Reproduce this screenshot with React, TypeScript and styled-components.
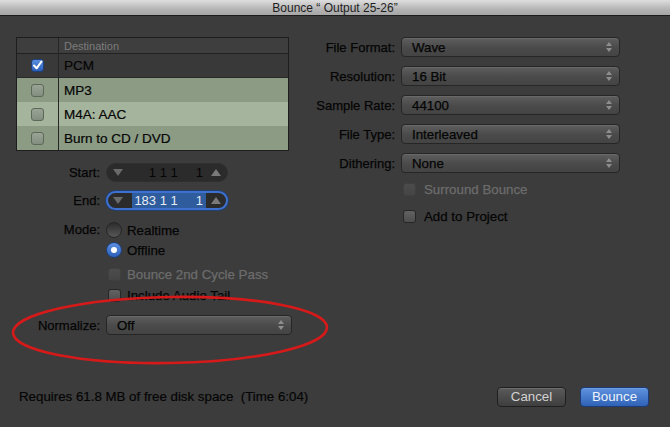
import React from "react";
import styled, { createGlobalStyle } from "styled-components";

const Global = createGlobalStyle`
  html, body { margin: 0; padding: 0; background: #3c3c3c; }
  body { font-family: "Liberation Sans", Arial, sans-serif; }
  * { box-sizing: border-box; }
`;

const Window = styled.div`
  position: relative;
  width: 670px;
  height: 427px;
  background: #3c3c3c;
  display: flex;
  flex-direction: column;
  overflow: hidden;
  font-size: 13px;
  color: #121212;
`;

const TitleBar = styled.div`
  height: 16px;
  border-bottom: 1px solid #1c1c1c;
  background: linear-gradient(#dedede, #b4b4b4 60%, #a6a6a6);
  display: flex;
  align-items: center;
  justify-content: center;
  font-size: 12px;
  color: #1e1e1e;
`;

const Body = styled.div`
  display: flex;
  padding: 21px 0 0 16px;
`;

const LeftCol = styled.div`
  width: 277px;
  display: flex;
  flex-direction: column;
`;

const RightCol = styled.div`
  margin-left: 17px;
  width: 310px;
  display: flex;
  flex-direction: column;
  gap: 9px;
`;

const Table = styled.div`
  width: 273px;
  height: 114px;
  border: 1px solid #1e1e1e;
  background: #3a3a3a;
  display: flex;
  flex-direction: column;
`;

const HeaderRow = styled.div`
  height: 16px;
  display: grid;
  grid-template-columns: 42px 1fr;
  border-bottom: 1px solid #222;
  background: #3e3e3e;
  font-size: 11px;
  color: #7c7c7c;
`;

const Cell = styled.div<{ $first?: boolean }>`
  display: flex;
  align-items: center;
  justify-content: ${(p) => (p.$first ? "center" : "flex-start")};
  padding-left: ${(p) => (p.$first ? "0" : "5px")};
  border-right: ${(p) => (p.$first ? "1px solid #262626" : "none")};
`;

const DestRow = styled.div<{ $bg: string; $sep?: boolean }>`
  height: 24px;
  display: grid;
  grid-template-columns: 42px 1fr;
  background: ${(p) => p.$bg};
  border-bottom: ${(p) => (p.$sep ? "1px solid #2a2a2a" : "none")};
  font-size: 13.5px;
  color: #050505;
  -webkit-text-stroke: 0.2px #050505;
`;

const Box = styled.span<{ $state: "on" | "off" | "row" | "dis" }>`
  width: 13px;
  height: 13px;
  border-radius: 3px;
  flex-shrink: 0;
  display: inline-flex;
  align-items: center;
  justify-content: center;
  border: 1px solid
    ${(p) =>
      p.$state === "on" ? "#1f3f7a" : p.$state === "row" ? "#5d6858" : p.$state === "dis" ? "#404040" : "#262626"};
  background: ${(p) =>
    p.$state === "on"
      ? "linear-gradient(#5a8ee0, #2c5fb8)"
      : p.$state === "row"
      ? "linear-gradient(#9aa496, #848e80)"
      : p.$state === "dis"
      ? "linear-gradient(#4c4c4c, #454545)"
      : "linear-gradient(#626262, #4e4e4e)"};
`;

const FieldRow = styled.div<{ $mt: number; $label?: number }>`
  display: grid;
  grid-template-columns: ${(p) => p.$label ?? 84}px auto;
  column-gap: 6px;
  align-items: center;
  margin-top: ${(p) => p.$mt}px;
`;

const Label = styled.span`
  text-align: right;
  color: #050505;
  -webkit-text-stroke: 0.25px #050505;
  font-size: 13px;
  white-space: nowrap;
`;

const Stepper = styled.div<{ $active?: boolean }>`
  width: 122px;
  height: 19px;
  border-radius: 10px;
  background: #2b2b2b;
  border: ${(p) => (p.$active ? "2px solid #3e70cf" : "1px solid #2f2f2f")};
  box-shadow: ${(p) => (p.$active ? "0 0 0 1px #21406f" : "none")};
  display: flex;
  align-items: center;
  padding: 0 ${(p) => (p.$active ? 5 : 6)}px;
  gap: 5px;
`;

const StepValue = styled.div<{ $active?: boolean }>`
  flex: 1;
  height: 15px;
  display: flex;
  align-items: center;
  justify-content: flex-end;
  gap: 18px;
  padding-right: 3px;
  white-space: nowrap;
  background: ${(p) => (p.$active ? "#2f5c9c" : "transparent")};
  color: ${(p) => (p.$active ? "#e6ecf5" : "#050505")};
  font-size: 13px;
  margin-left: ${(p) => (p.$active ? "4px" : "0")};
`;

const Tri = styled.span<{ $up?: boolean }>`
  width: 0;
  height: 0;
  flex-shrink: 0;
  border-left: 5px solid transparent;
  border-right: 5px solid transparent;
  ${(p) => (p.$up ? "border-bottom: 7px solid #7a7a7a;" : "border-top: 7px solid #6a6a6a;")}
`;

const OptionLine = styled.div<{ $mt: number; $indent: number; $gap?: number }>`
  display: flex;
  align-items: center;
  gap: ${(p) => p.$gap ?? 6}px;
  margin-top: ${(p) => p.$mt}px;
  margin-left: ${(p) => p.$indent}px;
`;

const OptText = styled.span<{ $dim?: boolean }>`
  color: ${(p) => (p.$dim ? "#6c6c6c" : "#050505")};
  -webkit-text-stroke: 0.25px ${(p) => (p.$dim ? "#6c6c6c" : "#050505")};
  font-size: 13.3px;
  white-space: nowrap;
`;

const Radio = styled.span<{ $on?: boolean }>`
  width: 16px;
  height: 16px;
  border-radius: 50%;
  display: inline-flex;
  align-items: center;
  justify-content: center;
  border: 1px solid ${(p) => (p.$on ? "#1f3f7a" : "#262626")};
  background: ${(p) =>
    p.$on ? "linear-gradient(#5d90e2, #2c5fb8)" : "linear-gradient(#2c2c2c, #575757)"};
  &::after {
    content: "";
    display: ${(p) => (p.$on ? "block" : "none")};
    width: 6px;
    height: 6px;
    border-radius: 50%;
    background: #fff;
  }
`;

const ModeGroup = styled.div`
  display: flex;
  flex-direction: column;
  gap: 4px;
`;

const Popup = styled.div<{ $w: number }>`
  width: ${(p) => p.$w}px;
  height: 20px;
  border-radius: 4px;
  border: 1px solid #262626;
  background: linear-gradient(#5e5e5e, #4a4a4a 55%, #444);
  box-shadow: inset 0 1px 0 rgba(255, 255, 255, 0.08);
  display: flex;
  align-items: center;
  justify-content: space-between;
  padding: 0 7px 0 10px;
  color: #050505;
  -webkit-text-stroke: 0.25px #050505;
  font-size: 13.3px;
`;

const Arrows = styled.span`
  display: flex;
  flex-direction: column;
  gap: 2px;
  &::before,
  &::after {
    content: "";
    width: 0;
    height: 0;
    border-left: 3px solid transparent;
    border-right: 3px solid transparent;
  }
  &::before { border-bottom: 4px solid #8e8e8e; }
  &::after { border-top: 4px solid #8e8e8e; }
`;

const Footer = styled.div`
  margin-top: auto;
  height: 50px;
  padding: 0 21px 11px 19px;
  display: flex;
  align-items: center;
  justify-content: space-between;
`;

const FooterText = styled.span`
  font-size: 13.3px;
  color: #050505;
  -webkit-text-stroke: 0.2px #050505;
  white-space: pre;
`;

const Buttons = styled.div`
  display: flex;
  gap: 14px;
`;

const Button = styled.button<{ $primary?: boolean }>`
  width: 69px;
  height: 20px;
  border-radius: 4px;
  font-family: "Liberation Sans", Arial, sans-serif;
  font-size: 13.3px;
  padding: 0;
  border: 1px solid ${(p) => (p.$primary ? "#1b3c78" : "#1f1f1f")};
  color: ${(p) => (p.$primary ? "#eef3fb" : "#d2d2d2")};
  background: ${(p) =>
    p.$primary ? "linear-gradient(#5f93e0, #2f62b6)" : "linear-gradient(#5a5a5a, #3e3e3e)"};
  box-shadow: inset 0 1px 0 rgba(255, 255, 255, 0.12);
`;

const Annotation = styled.svg`
  position: absolute;
  left: 0;
  top: 0;
  pointer-events: none;
`;

const Check = () => (
  <svg width="11" height="11" viewBox="0 0 11 11">
    <path d="M2 5.5 L4.6 8.3 L9.5 1.5" fill="none" stroke="#fff" strokeWidth="2" strokeLinecap="round" strokeLinejoin="round" />
  </svg>
);

const destinations: { name: string; bg: string; on?: boolean }[] = [
  { name: "PCM", bg: "#393939", on: true },
  { name: "MP3", bg: "#8b9b84" },
  { name: "M4A: AAC", bg: "#a5b49d" },
  { name: "Burn to CD / DVD", bg: "#8b9b84" },
];

const rightPopups = [
  ["File Format:", "Wave"],
  ["Resolution:", "16 Bit"],
  ["Sample Rate:", "44100"],
  ["File Type:", "Interleaved"],
  ["Dithering:", "None"],
];

export default function App() {
  return (
    <>
      <Global />
      <Window>
        <TitleBar>Bounce “ Output 25-26”</TitleBar>
        <Body>
          <LeftCol>
            <Table>
              <HeaderRow>
                <Cell $first />
                <Cell>Destination</Cell>
              </HeaderRow>
              {destinations.map((d, i) => (
                <DestRow key={d.name} $bg={d.bg} $sep={i === 0}>
                  <Cell $first>
                    <Box $state={d.on ? "on" : "row"}>{d.on && <Check />}</Box>
                  </Cell>
                  <Cell>{d.name}</Cell>
                </DestRow>
              ))}
            </Table>

            <FieldRow $mt={12}>
              <Label>Start:</Label>
              <Stepper>
                <Tri />
                <StepValue>
                  <span>1 1 1</span>
                  <span>1</span>
                </StepValue>
                <Tri $up />
              </Stepper>
            </FieldRow>
            <FieldRow $mt={9}>
              <Label>End:</Label>
              <Stepper $active>
                <Tri />
                <StepValue $active>
                  <span>183 1 1</span>
                  <span>1</span>
                </StepValue>
                <Tri $up />
              </Stepper>
            </FieldRow>

            <FieldRow $mt={12} style={{ alignItems: "start" }}>
              <Label style={{ lineHeight: "16px" }}>Mode:</Label>
              <ModeGroup>
                <OptionLine $mt={0} $indent={0} $gap={5}>
                  <Radio />
                  <OptText>Realtime</OptText>
                </OptionLine>
                <OptionLine $mt={0} $indent={0} $gap={5}>
                  <Radio $on />
                  <OptText>Offline</OptText>
                </OptionLine>
              </ModeGroup>
            </FieldRow>

            <OptionLine $mt={9} $indent={92}>
              <Box $state="dis" />
              <OptText $dim>Bounce 2nd Cycle Pass</OptText>
            </OptionLine>
            <OptionLine $mt={6} $indent={92}>
              <Box $state="off" />
              <OptText>Include Audio Tail</OptText>
            </OptionLine>

            <FieldRow $mt={12}>
              <Label>Normalize:</Label>
              <Popup $w={186}>
                <span>Off</span>
                <Arrows />
              </Popup>
            </FieldRow>
          </LeftCol>

          <RightCol>
            {rightPopups.map(([l, v]) => (
              <FieldRow key={l} $mt={0} $label={85}>
                <Label>{l}</Label>
                <Popup $w={219}>
                  <span>{v}</span>
                  <Arrows />
                </Popup>
              </FieldRow>
            ))}
            <OptionLine $mt={0} $indent={93} $gap={8}>
              <Box $state="dis" />
              <OptText $dim>Surround Bounce</OptText>
            </OptionLine>
            <OptionLine $mt={3} $indent={93} $gap={8}>
              <Box $state="off" />
              <OptText>Add to Project</OptText>
            </OptionLine>
          </RightCol>
        </Body>

        <Footer>
          <FooterText>Requires 61.8 MB of free disk space  (Time 6:04)</FooterText>
          <Buttons>
            <Button>Cancel</Button>
            <Button $primary>Bounce</Button>
          </Buttons>
        </Footer>

        <Annotation width="670" height="427" viewBox="0 0 670 427">
          <ellipse cx="170" cy="330" rx="157" ry="33" fill="none" stroke="#d61a1a" strokeWidth="2.6" transform="rotate(-1 170 330)" />
        </Annotation>
      </Window>
    </>
  );
}
